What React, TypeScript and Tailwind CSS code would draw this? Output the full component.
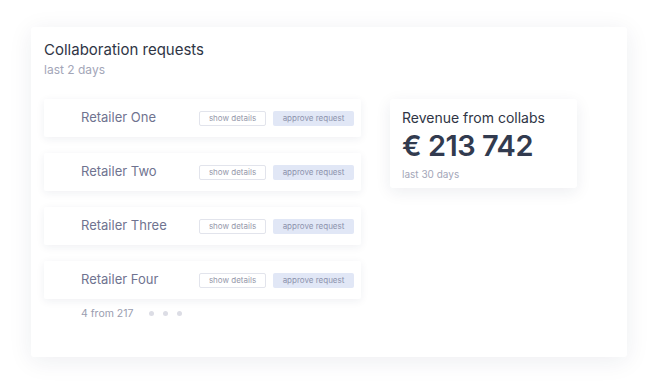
import React from "react";

const rows = ["Retailer One", "Retailer Two", "Retailer Three", "Retailer Four"];

export default function App() {
  return (
    <div className="w-[658px] h-[392px] bg-white overflow-hidden pt-[27px] pl-[31px]" style={{ fontFamily: "Inter, 'Noto Sans', sans-serif" }}>
      <div className="w-[596px] h-[330px] bg-white rounded-[3px] shadow-[0_4px_24px_rgba(30,40,80,0.08)] pt-[13px] pl-[13px] flex flex-col">
        <div className="text-[15px] leading-[20px] text-[#2f3545]">Collaboration requests</div>
        <div className="text-[12px] leading-[16px] text-[#a3a6b8] mt-[2px]">last 2 days</div>
        <div className="flex mt-[21px]">
          <div className="flex flex-col gap-[16px] w-[317px]">
            {rows.map((r) => (
              <div key={r} className="h-[38px] bg-white rounded-[2px] shadow-[0_2px_8px_rgba(30,40,80,0.07)] flex items-center pl-[37px] pr-[7px]">
                <div className="text-[13px] text-[#6f7390] flex-1">{r}</div>
                <div className="h-[15px] w-[67px] border border-[#e2e4ec] rounded-[2px] text-[8px] text-[#9598aa] flex items-center justify-center">show details</div>
                <div className="h-[15px] w-[81px] ml-[7px] bg-[#e1e7f6] rounded-[2px] text-[8px] text-[#8d93ad] flex items-center justify-center">approve request</div>
              </div>
            ))}
            <div className="flex items-center pl-[37px] -mt-[9px]">
              <span className="text-[10.5px] text-[#9a9db0]">4 from 217</span>
              <div className="flex gap-[9px] ml-[16px]">
                <span className="w-[5px] h-[5px] rounded-full bg-[#dcdde5]" />
                <span className="w-[5px] h-[5px] rounded-full bg-[#dcdde5]" />
                <span className="w-[5px] h-[5px] rounded-full bg-[#dcdde5]" />
              </div>
            </div>
          </div>
          <div className="ml-[29px] w-[187px] h-[89px] bg-white rounded-[3px] shadow-[0_4px_16px_rgba(30,40,80,0.08)] px-[12px] pt-[10px]">
            <div className="text-[14px] leading-[18px] text-[#2f3545]">Revenue from collabs</div>
            <div className="text-[29px] leading-[34px] font-semibold tracking-[-0.5px] text-[#323b4f] mt-[2px]">€ 213 742</div>
            <div className="text-[10px] leading-[14px] text-[#a3a6b8] mt-[4px]">last 30 days</div>
          </div>
        </div>
      </div>
    </div>
  );
}
